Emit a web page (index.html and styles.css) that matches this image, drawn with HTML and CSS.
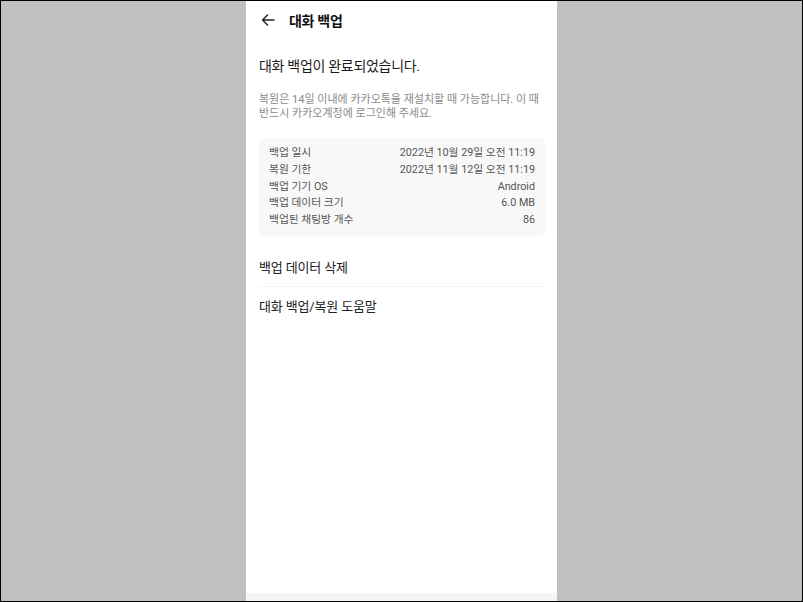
FILE: index.html
```html
<!DOCTYPE html>
<html lang="ko">
<head>
<meta charset="utf-8">
<title>대화 백업</title>
<link rel="stylesheet" href="styles.css">
</head>
<body>
<div class="screen">
  <div class="phone">
    <header class="appbar">
      <svg class="back" width="14" height="12" viewBox="0 0 14 12" aria-hidden="true">
        <path d="M13 6H1.5M6.5 1L1.5 6l5 5" fill="none" stroke="#222" stroke-width="1.4" stroke-linecap="round" stroke-linejoin="round"/>
      </svg>
      <span class="appbar-title">대화 백업</span>
    </header>
    <main class="content">
      <h1 class="heading">대화 백업이 완료되었습니다.</h1>
      <p class="note">복원은 14일 이내에 카카오톡을 재설치할 때 가능합니다. 이 때 반드시 카카오계정에 로그인해 주세요.</p>
      <div class="card">
        <div class="row"><span class="label">백업 일시</span><span class="value">2022년 10월 29일 오전 11:19</span></div>
        <div class="row"><span class="label">복원 기한</span><span class="value">2022년 11월 12일 오전 11:19</span></div>
        <div class="row"><span class="label">백업 기기 OS</span><span class="value">Android</span></div>
        <div class="row"><span class="label">백업 데이터 크기</span><span class="value">6.0 MB</span></div>
        <div class="row"><span class="label">백업된 채팅방 개수</span><span class="value">86</span></div>
      </div>
      <ul class="menu">
        <li class="menu-item">백업 데이터 삭제</li>
        <li class="menu-item">대화 백업/복원 도움말</li>
      </ul>
    </main>
    <div class="navstrip"></div>
  </div>
</div>
</body>
</html>
```

FILE: styles.css
```css
html, body {
  margin: 0;
  padding: 0;
  height: 100%;
}
body {
  font-family: Roboto, "Noto Sans CJK KR", sans-serif;
  color: #222;
}
.screen {
  box-sizing: border-box;
  height: 100%;
  border: 1px solid #000;
  background: #c0c0c0;
  display: flex;
  justify-content: center;
}
.phone {
  width: 311px;
  background: #fff;
  display: flex;
  flex-direction: column;
}
.appbar {
  height: 38px;
  display: flex;
  align-items: center;
  padding-left: 15px;
  flex-shrink: 0;
}
.back {
  display: block;
  margin-right: 14px;
}
.appbar-title {
  font-size: 14px;
  font-weight: 700;
  letter-spacing: -0.3px;
  color: #111;
}
.content {
  flex: 1;
  padding: 0 12px 0 13px;
}
.heading {
  margin: 17px 0 0;
  font-size: 14px;
  font-weight: 400;
  letter-spacing: -0.3px;
  line-height: 20px;
  color: #1a1a1a;
}
.note {
  margin: 17px 0 0;
  font-size: 11px;
  line-height: 14px;
  color: #8a8a8a;
}
.card {
  margin-top: 17px;
  background: #f8f8f8;
  border-radius: 5px;
  padding: 7px 10px;
}
.row {
  display: flex;
  justify-content: space-between;
  font-size: 10.75px;
  line-height: 16.75px;
  color: #555;
}
.menu {
  list-style: none;
  margin: 12px 0 0;
  padding: 0;
}
.menu-item {
  box-sizing: border-box;
  height: 38px;
  display: flex;
  align-items: center;
  font-size: 13px;
  letter-spacing: -0.15px;
  color: #222;
}
.menu-item + .menu-item {
  border-top: 1px solid #f4f4f4;
  height: 39px;
}
.navstrip {
  height: 8px;
  background: #f5f5f5;
  flex-shrink: 0;
}
```
